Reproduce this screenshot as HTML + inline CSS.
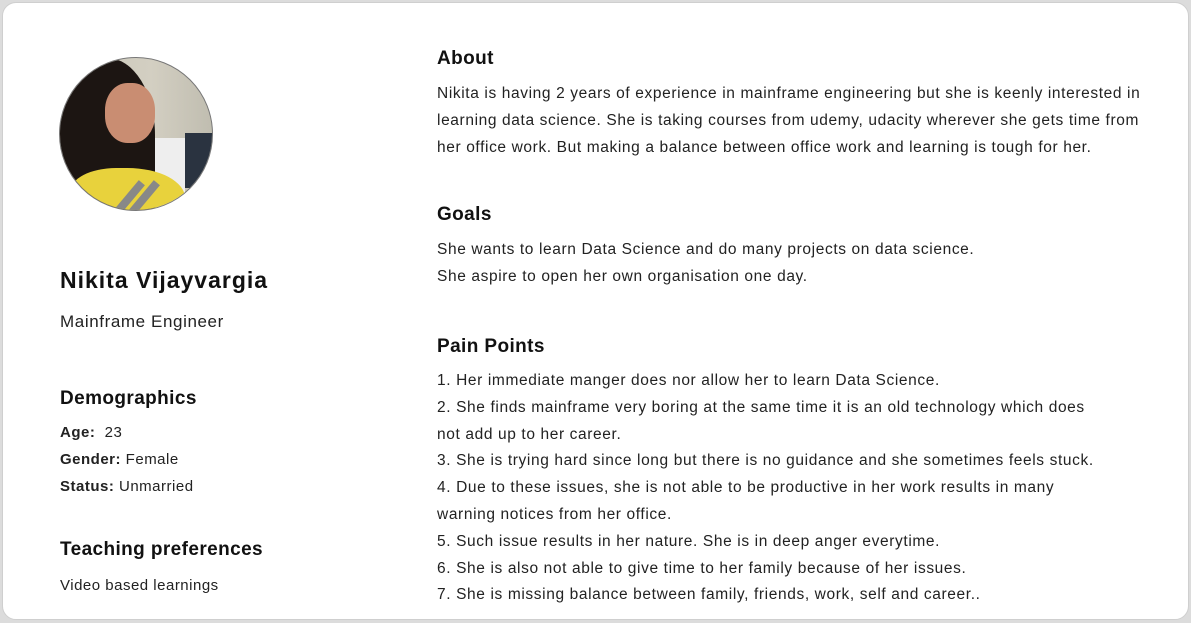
<!DOCTYPE html>
<html><head><meta charset="utf-8"><style>
body{margin:0;width:1191px;height:623px;background:#dcdcdc;overflow:hidden;font-family:"Liberation Sans",sans-serif;color:#1a1a1a}
.card{position:absolute;left:2px;top:2px;width:1185px;height:616px;background:#fff;border:1px solid #cfcfcf;border-radius:14px}
.t{position:absolute;white-space:nowrap}
h{position:absolute;white-space:nowrap;font-weight:bold;font-size:19px;color:#111;letter-spacing:0.4px}
.b{font-size:15.5px;line-height:26.8px;color:#222;letter-spacing:0.62px}
.s{font-size:15px;color:#222;letter-spacing:0.5px}
.photo{position:absolute;left:59px;top:57px;width:154px;height:154px;border-radius:50%;overflow:hidden;border:1px solid #777;box-sizing:border-box;background:linear-gradient(90deg,#c9c6b8 0%,#d3cfc2 60%,#c0bdb0 100%)}
</style></head><body>
<div class="card"></div>
<div class="photo">
<div style="position:absolute;left:0;top:0;width:95px;height:154px;background:#1c1512;border-radius:40% 50% 0 0"></div>
<div style="position:absolute;left:45px;top:25px;width:50px;height:60px;background:#c98d72;border-radius:45%"></div>
<div style="position:absolute;left:125px;top:75px;width:30px;height:55px;background:#2a3340"></div>
<div style="position:absolute;left:95px;top:80px;width:30px;height:75px;background:#eeeeee"></div>
<div style="position:absolute;left:10px;top:110px;width:115px;height:60px;background:#e8d23c;border-radius:40% 50% 0 0"></div>
<div style="position:absolute;left:65px;top:120px;width:8px;height:40px;background:#888;transform:rotate(40deg)"></div>
<div style="position:absolute;left:80px;top:120px;width:8px;height:40px;background:#888;transform:rotate(40deg)"></div>
</div>
<h style="left:60px;top:267px;font-size:23px;letter-spacing:1px">Nikita Vijayvargia</h>
<div class="t" style="left:60px;top:312px;font-size:17px;color:#222;letter-spacing:0.6px">Mainframe Engineer</div>
<h style="left:60px;top:388px">Demographics</h>
<div class="t s" style="left:60px;top:424px"><b>Age:</b>&nbsp; 23</div>
<div class="t s" style="left:60px;top:451px"><b>Gender:</b> Female</div>
<div class="t s" style="left:60px;top:478px"><b>Status:</b> Unmarried</div>
<h style="left:60px;top:539px">Teaching preferences</h>
<div class="t s" style="left:60px;top:577px">Video based learnings</div>

<h style="left:437px;top:48px">About</h>
<div class="t b" style="left:437px;top:81px">Nikita is having 2 years of experience in mainframe engineering but she is keenly interested in<br>learning data science. She is taking courses from udemy, udacity wherever she gets time from<br>her office work. But making a balance between office work and learning is tough for her.</div>
<h style="left:437px;top:204px">Goals</h>
<div class="t b" style="left:437px;top:237px">She wants to learn Data Science and do many projects on data science.<br>She aspire to open her own organisation one day.</div>
<h style="left:437px;top:336px">Pain Points</h>
<div class="t b" style="left:437px;top:368px">1. Her immediate manger does nor allow her to learn Data Science.<br>2. She finds mainframe very boring at the same time it is an old technology which does<br>not add up to her career.<br>3. She is trying hard since long but there is no guidance and she sometimes feels stuck.<br>4. Due to these issues, she is not able to be productive in her work results in many<br>warning notices from her office.<br>5. Such issue results in her nature. She is in deep anger everytime.<br>6. She is also not able to give time to her family because of her issues.<br>7. She is missing balance between family, friends, work, self and career..</div>
</body></html>
